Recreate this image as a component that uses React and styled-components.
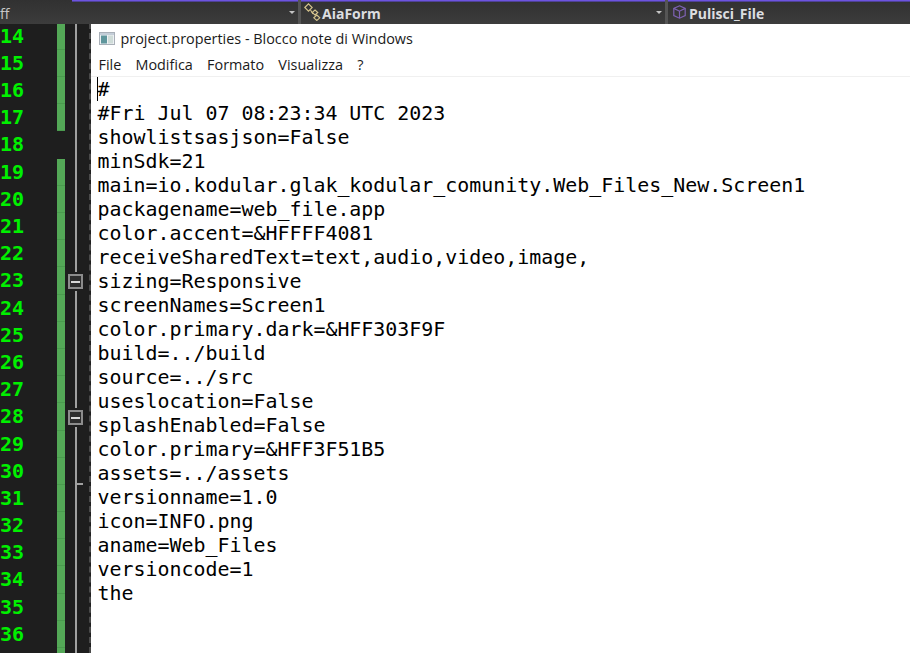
import styled, { createGlobalStyle } from "styled-components";

const GlobalStyle = createGlobalStyle`
  html, body {
    margin: 0;
    padding: 0;
    background: #1e1e1e;
  }
`;

const firstLine = 14;
const lastLine = 36;
const unchangedLine = 18;
const foldLines = { 23: "box", 28: "box", 30: "end" };

const fileLines = [
  "#",
  "#Fri Jul 07 08:23:34 UTC 2023",
  "showlistsasjson=False",
  "minSdk=21",
  "main=io.kodular.glak_kodular_comunity.Web_Files_New.Screen1",
  "packagename=web_file.app",
  "color.accent=&HFFFF4081",
  "receiveSharedText=text,audio,video,image,",
  "sizing=Responsive",
  "screenNames=Screen1",
  "color.primary.dark=&HFF303F9F",
  "build=../build",
  "source=../src",
  "useslocation=False",
  "splashEnabled=False",
  "color.primary=&HFF3F51B5",
  "assets=../assets",
  "versionname=1.0",
  "icon=INFO.png",
  "aname=Web_Files",
  "versioncode=1",
  "the",
];

function ClassIcon() {
  return (
    <svg width="17" height="18" viewBox="0 0 17 18" fill="none" stroke="#d6c48e" strokeWidth="1.1">
      <path d="M0.8 4.5 L4.5 0.8 L8.2 4.5 L4.5 8.2 Z" />
      <path d="M6.5 7 L9 11" />
      <path d="M11 7 L13.8 9.5 L11 12 L8.2 9.5 Z" />
      <path d="M11.5 11.5 L12.5 12.5" />
      <path d="M12.8 12 L15.8 14.8 L12.8 17.5 L9.8 14.8 Z" />
    </svg>
  );
}

function CubeIcon() {
  return (
    <svg width="13" height="14" viewBox="0 0 13 14" fill="none" stroke="#7e62b4" strokeWidth="1.2">
      <path d="M6.5 0.8 L12.2 3.4 V10.6 L6.5 13.2 L0.8 10.6 V3.4 Z" />
      <path d="M0.8 3.4 L6.5 6.2 L12.2 3.4 M6.5 6.2 V13.2" />
    </svg>
  );
}

function NotepadIcon() {
  return (
    <svg width="16" height="13" viewBox="0 0 16 13">
      <rect x="0.5" y="0.5" width="15" height="12" fill="#eef1f4" stroke="#a9b0b8" />
      <rect x="1" y="1" width="14" height="2" fill="#c4ced8" />
      <rect x="2" y="3.5" width="6" height="8" fill="#5f969c" />
      <rect x="9" y="3.5" width="5" height="8" fill="#cfdcd8" />
    </svg>
  );
}

function FoldMark({ kind }) {
  if (kind === "box") {
    return (
      <FoldBox>
        <FoldMinus />
      </FoldBox>
    );
  }
  if (kind === "end") return <FoldEnd />;
  return null;
}

export default function App() {
  // one row more than the numbers: the last one is cut by the window edge
  const rows = Array.from({ length: lastLine - firstLine + 2 }, (_, i) => firstLine + i);

  return (
    <Page>
      <GlobalStyle />
      <TopBar>
        <Combo $width={301}>
          <ComboPlain>ff</ComboPlain>
          <ComboArrow />
        </Combo>
        <Combo $width={367}>
          <ClassIcon />
          <ComboBold>AiaForm</ComboBold>
          <ComboArrow />
        </Combo>
        <Combo $grow>
          <CubeIcon />
          <ComboBold>Pulisci_File</ComboBold>
        </Combo>
      </TopBar>
      <Main>
        <Gutter>
          {rows.map((n) => (
            <GutterRow key={n}>
              <LineNumber>{n <= lastLine ? n : ""}</LineNumber>
              <ChangeCell $changed={n !== unchangedLine} />
              <FoldCell>
                <FoldMark kind={foldLines[n]} />
              </FoldCell>
            </GutterRow>
          ))}
        </Gutter>
        <Notepad>
          <TitleBar>
            <NotepadIcon />
            <TitleText>project.properties - Blocco note di Windows</TitleText>
          </TitleBar>
          <MenuBar>
            <MenuItem>File</MenuItem>
            <MenuItem>Modifica</MenuItem>
            <MenuItem>Formato</MenuItem>
            <MenuItem>Visualizza</MenuItem>
            <MenuItem>?</MenuItem>
          </MenuBar>
          <TextArea>
            <Caret />
            {fileLines.map((line, i) => (
              <TextLine key={i}>{line}</TextLine>
            ))}
          </TextArea>
        </Notepad>
      </Main>
    </Page>
  );
}

const Page = styled.div`
  width: 910px;
  height: 653px;
  overflow: hidden;
  display: flex;
  flex-direction: column;
  background: #1e1e1e;
`;

const TopBar = styled.div`
  position: relative;
  z-index: 1;
  flex: none;
  height: 24px;
  box-sizing: border-box;
  display: flex;
  background: linear-gradient(#313131, #3c3c3c);
  &::before {
    content: "";
    position: absolute;
    left: 72px;
    right: 0;
    top: 0;
    height: 2px;
    background: linear-gradient(#6d54e0 50%, #4f4296 50%);
  }
`;

const Combo = styled.div`
  position: relative;
  box-sizing: border-box;
  display: flex;
  align-items: center;
  gap: ${(p) => (p.$grow ? "3px" : "1px")};
  padding-left: ${(p) => (p.$grow ? "5px" : "3px")};
  width: ${(p) => (p.$grow ? "auto" : `${p.$width}px`)};
  flex: ${(p) => (p.$grow ? 1 : "none")};
  border-right: ${(p) => (p.$grow ? "none" : "3px solid #555555")};
`;

const ComboPlain = styled.span`
  margin-left: -3px;
  padding-top: 2px;
  font: 14px "Open Sans", sans-serif;
  color: #c8c8c8;
`;

const ComboBold = styled.span`
  padding-top: 2px;
  font: bold 14px "Open Sans", sans-serif;
  color: #dcdee0;
`;

const ComboArrow = styled.span`
  position: absolute;
  right: 3px;
  top: 11px;
  border-left: 3px solid transparent;
  border-right: 3px solid transparent;
  border-top: 3px solid #c4c4c4;
`;

const Main = styled.div`
  flex: 1;
  min-height: 0;
  display: flex;
`;

const Gutter = styled.div`
  flex: none;
  width: 91px;
  margin-top: -1.3px;
  background: #1e1e1e;
  border-right: 2px dashed #4a4a4a;
  box-sizing: border-box;
`;

const GutterRow = styled.div`
  height: 27.2px;
  display: flex;
`;

const LineNumber = styled.span`
  flex: none;
  width: 57px;
  font: bold 20px/27px "DejaVu Sans Mono", monospace;
  color: #00f000;
`;

const ChangeCell = styled.span`
  flex: none;
  width: 7.5px;
  box-sizing: border-box;
  background: ${(p) => (p.$changed ? "#54a857" : "transparent")};
  border-bottom: 1px solid ${(p) => (p.$changed ? "#4a9a4e" : "transparent")};
`;

const FoldCell = styled.span`
  position: relative;
  flex: none;
  width: 24.5px;
  &::before {
    content: "";
    position: absolute;
    left: 10.5px;
    top: 0;
    bottom: 0;
    width: 2px;
    background: #a0a0a0;
  }
`;

const FoldBox = styled.span`
  position: absolute;
  z-index: 1;
  left: 3.5px;
  top: 7px;
  width: 15px;
  height: 15px;
  box-sizing: border-box;
  background: #2d2d2d;
  border: 2px solid #8c8c8c;
  outline: 2px solid #1e1e1e;
  display: flex;
  align-items: center;
  justify-content: center;
`;

const FoldMinus = styled.span`
  width: 9px;
  height: 2px;
  background: #d8d8d8;
`;

const FoldEnd = styled.span`
  position: absolute;
  left: 12.5px;
  top: 25px;
  width: 6px;
  height: 2px;
  background: #a0a0a0;
`;

const Notepad = styled.div`
  flex: 1;
  min-width: 0;
  display: flex;
  flex-direction: column;
  background: #ffffff;
  padding-left: 6.5px;
`;

const TitleBar = styled.div`
  flex: none;
  height: 28px;
  display: flex;
  align-items: center;
  gap: 5.5px;
  padding-left: 1.5px;
`;

const TitleText = styled.span`
  font: 14.4px "Open Sans", sans-serif;
  color: #1a1a1a;
`;

const MenuBar = styled.div`
  flex: none;
  height: 24px;
  display: flex;
  align-items: center;
  gap: 14.2px;
  margin-left: -6.5px;
  padding-left: 7.5px;
  border-bottom: 1px solid #f0f0f0;
`;

const MenuItem = styled.span`
  font: 14.4px "Open Sans", sans-serif;
  color: #1a1a1a;
`;

const TextArea = styled.div`
  position: relative;
  padding-top: 1px;
`;

const Caret = styled.span`
  position: absolute;
  left: -0.5px;
  top: 0;
  width: 1px;
  height: 24px;
  background: #000000;
`;

const TextLine = styled.div`
  height: 24px;
  font: 19.93px/24px "DejaVu Sans Mono", monospace;
  color: #000000;
  white-space: pre;
`;
